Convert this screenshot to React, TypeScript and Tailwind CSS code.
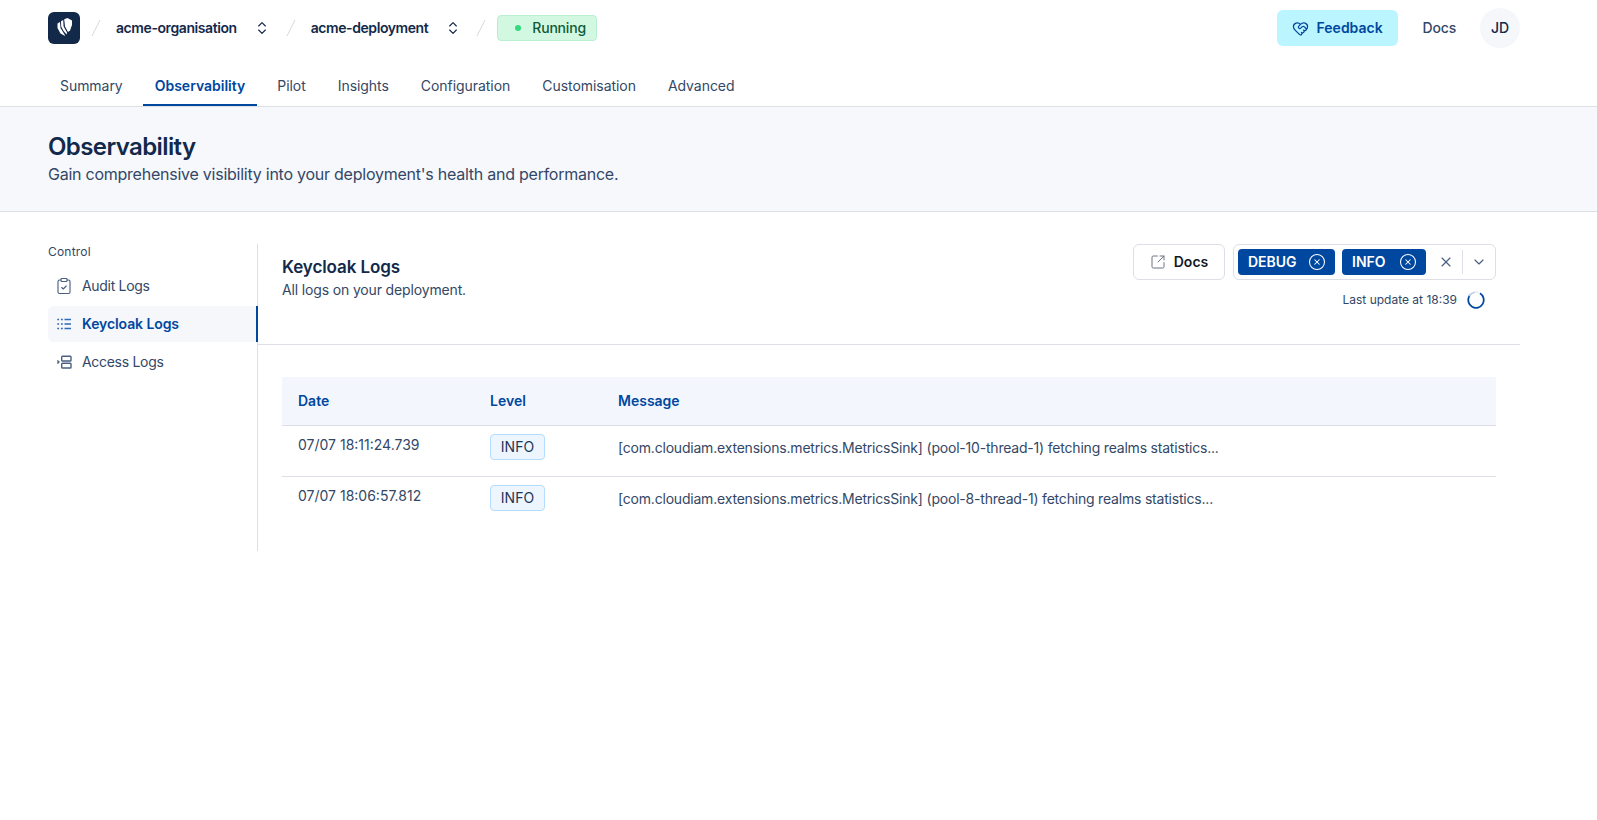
import { ClipboardCheck, HeartHandshake, SquareArrowOutUpRight, CircleX, X, ChevronDown, ChevronsUpDown } from "lucide-react";

const tabs = ["Summary", "Observability", "Pilot", "Insights", "Configuration", "Customisation", "Advanced"];

function Slash() {
  return (
    <svg width="10" height="20" viewBox="0 0 10 20" className="shrink-0">
      <path d="M1 18 L9 2" stroke="#d5d9e0" strokeWidth="1" />
    </svg>
  );
}

function Logo() {
  return (
    <div className="w-8 h-8 rounded-md bg-[#12294a] shrink-0">
      <svg width="32" height="32" viewBox="0 0 32 32" fill="#fff">
        <path d="M9.5 11.5 L12 10 L12.5 16 L16.5 22.5 L17 24 L12.5 21.5 L9.5 16 Z" />
        <path d="M13 9.2 L15.2 8 L15.6 14.5 L19 20.5 L18.6 22.4 L15.4 18.8 L13.2 14.5 Z" />
        <path d="M16.2 7.2 L19.5 6 L24 8.5 L24 13 L22 18.5 L20 20 L17 14.5 Z" />
      </svg>
    </div>
  );
}

function ListDots() {
  return (
    <svg width="18" height="18" viewBox="0 0 18 18" fill="none" stroke="#2f6bb5" strokeWidth="1.5" className="shrink-0">
      <path d="M2.3 4.5h1.8M2.3 9h1.8M2.3 13.5h1.8M6 4.5h1.8M6 9h1.8M6 13.5h1.8" />
      <path d="M9.5 4.5h6.5M9.5 9h6.5M9.5 13.5h6.5" />
    </svg>
  );
}

function AccessIcon() {
  return (
    <svg width="18" height="18" viewBox="0 0 18 18" fill="none" stroke="#4a5f82" strokeWidth="1.4" className="shrink-0">
      <rect x="6.7" y="3.2" width="9.3" height="4.8" rx="0.8" />
      <rect x="6.7" y="10.2" width="9.3" height="4.8" rx="0.8" />
      <path d="M2.3 7.5 L3.9 9 L2.3 10.5" />
    </svg>
  );
}

function Spinner() {
  return (
    <svg width="20" height="20" viewBox="0 0 20 20" fill="none">
      <circle cx="10" cy="10" r="7.8" stroke="#0047a0" strokeWidth="1.8" strokeDasharray="38 11" transform="rotate(-60 10 10)" />
      <circle cx="10" cy="10" r="7.8" stroke="#c3d3e8" strokeWidth="1.8" strokeDasharray="7 42" transform="rotate(-150 10 10)" />
      <circle cx="10" cy="10" r="7.8" stroke="#e6edf6" strokeWidth="1.8" strokeDasharray="4 45" transform="rotate(-99 10 10)" />
    </svg>
  );
}

function Chip({ label, width }: { label: string; width: string }) {
  return (
    <span className={`${width} h-[26px] rounded bg-[#0047a0] text-white text-sm font-semibold flex items-center justify-between pl-[10px] pr-[9px]`}>
      {label}
      <CircleX size={18} strokeWidth={1.4} />
    </span>
  );
}

function Row({ date, thread }: { date: string; thread: string }) {
  return (
    <div className="flex h-[51px] border-b border-[#dcdfe5] last:border-b-0 text-sm text-[#334766]">
      <div className="w-[208px] pl-4 pt-[9px] leading-[20px] text-[#334766]">{date}</div>
      <div className="w-[128px] pt-[8px]">
        <span className="inline-flex items-center justify-center w-[55px] h-[26px] rounded border border-[#b5dcfb] bg-[#edf6fe] text-[#1f3556]">INFO</span>
      </div>
      <div className="flex-1 pt-[12px] leading-[20px] tracking-[-0.2px]">
        [com.cloudiam.extensions.metrics.MetricsSink] ({thread}) fetching realms statistics...
      </div>
    </div>
  );
}

export default function App() {
  return (
    <div className="min-h-[820px] bg-white text-[#12294a] font-['Inter',sans-serif]">
      <div className="pl-12 pr-[77px]">
        <header className="h-[56px] flex items-center">
          <Logo />
          <div className="ml-[11px]"><Slash /></div>
          <span className="ml-[15px] text-sm font-semibold tracking-[-0.42px]">acme-organisation</span>
          <ChevronsUpDown size={16} strokeWidth={1.75} className="ml-[17px]" />
          <div className="ml-[16px]"><Slash /></div>
          <span className="ml-[15px] text-sm font-semibold tracking-[-0.42px]">acme-deployment</span>
          <ChevronsUpDown size={16} strokeWidth={1.75} className="ml-[17px]" />
          <div className="ml-[15px]"><Slash /></div>
          <span className="ml-[11px] h-[26px] w-[100px] rounded border border-[#b7f0cf] bg-[#d3f8e2] flex items-center pl-[17px] gap-[11px] text-sm font-medium text-[#0d5c36] tracking-[-0.2px]">
            <span className="w-[6px] h-[6px] rounded-full bg-[#34d982]" />
            Running
          </span>
          <div className="ml-auto flex items-center">
            <button className="w-[121px] h-[36px] rounded-md bg-[#bbf5ff] text-[#0047a0] text-sm font-semibold flex items-center justify-center gap-2">
              <HeartHandshake size={17} strokeWidth={1.75} />
              Feedback
            </button>
            <span className="ml-[25px] text-sm font-medium text-[#334766] tracking-[-0.2px]">Docs</span>
            <span className="ml-[24px] w-10 h-10 rounded-full bg-[#f5f7fb] flex items-center justify-center text-sm font-medium">JD</span>
          </div>
        </header>
        <nav className="h-[50px] flex items-end gap-2">
          {tabs.map((t) => (
            <a
              key={t}
              className={
                t === "Observability"
                  ? "h-[41px] px-3 pt-[2px] flex items-center text-sm font-semibold text-[#0047a0] border-b-2 border-[#0047a0]"
                  : "h-[41px] px-3 pt-[2px] flex items-center text-sm text-[#334766] tracking-[-0.05px] border-b-2 border-transparent"
              }
            >
              {t}
            </a>
          ))}
        </nav>
      </div>
      <section className="h-[106px] bg-[#f6f8fc] border-y border-[#dcdfe5] pl-12 pt-[25px]">
        <h1 className="text-2xl leading-[30px] font-semibold tracking-tight text-[#12294a]">Observability</h1>
        <p className="text-base leading-[24px] text-[#334766] tracking-[-0.245px]">Gain comprehensive visibility into your deployment's health and performance.</p>
      </section>
      <div className="pl-12 pr-[77px] pt-[32px] flex">
        <aside className="w-[210px] h-[307px] shrink-0 border-r border-[#dcdfe5]">
          <div className="text-xs leading-[16px] text-[#334766] tracking-[0.2px]">Control</div>
          <div className="mt-[8px] flex flex-col gap-[2px] text-sm">
            <a className="h-[36px] flex items-center gap-[9px] pl-[7px] text-[#334766] tracking-[-0.3px]">
              <ClipboardCheck size={18} strokeWidth={1.5} color="#4a5f82" />
              Audit Logs
            </a>
            <a className="h-[36px] flex items-center gap-[9px] pl-[7px] -mr-px rounded-l-md bg-[#f5f7fb] border-r-2 border-[#0047a0] font-semibold text-[#0047a0] tracking-[-0.1px]">
              <ListDots />
              Keycloak Logs
            </a>
            <a className="h-[36px] flex items-center gap-[9px] pl-[7px] text-[#334766] tracking-[-0.3px]">
              <AccessIcon />
              Access Logs
            </a>
          </div>
        </aside>
        <main className="flex-1 min-w-0">
          <div className="h-[101px] border-b border-[#dcdfe5] pl-6 pr-6 flex justify-between">
            <div className="pt-[11px]">
              <h2 className="text-[17px] leading-[24px] font-semibold text-[#12294a] tracking-[-0.1px]">Keycloak Logs</h2>
              <p className="mt-[1px] text-sm leading-[20px] text-[#334766] tracking-[-0.15px]">All logs on your deployment.</p>
            </div>
            <div className="flex flex-col items-end">
              <div className="flex gap-2">
                <button className="w-[92px] h-[36px] rounded-md border border-[#dcdfe5] bg-white flex items-center justify-center gap-2 text-sm font-semibold text-[#111827]">
                  <SquareArrowOutUpRight size={16} strokeWidth={1.5} color="#6b7280" />
                  Docs
                </button>
                <div className="w-[263px] h-[36px] rounded-md border border-[#dcdfe5] flex items-center pl-[4px] gap-[7px]">
                  <Chip label="DEBUG" width="w-[97px]" />
                  <Chip label="INFO" width="w-[84px]" />
                  <X size={16} strokeWidth={1.75} color="#4a5f82" className="ml-[5px]" />
                  <span className="w-px h-[24px] bg-[#dcdfe5] ml-[1px]" />
                  <ChevronDown size={16} strokeWidth={1.75} color="#4a5f82" className="ml-[1px]" />
                </div>
              </div>
              <div className="mt-[10px] flex items-center gap-[9px] pr-[10px] text-xs text-[#334766]">
                Last update at 18:39
                <Spinner />
              </div>
            </div>
          </div>
          <div className="pl-6 pr-6 pt-[32px]">
            <div className="h-[49px] flex items-center bg-[#f3f7fd] border-b border-[#dcdfe5] text-sm font-semibold text-[#0047a0]">
              <div className="w-[208px] pl-4">Date</div>
              <div className="w-[128px]">Level</div>
              <div>Message</div>
            </div>
            <Row date="07/07 18:11:24.739" thread="pool-10-thread-1" />
            <Row date="07/07 18:06:57.812" thread="pool-8-thread-1" />
          </div>
        </main>
      </div>
    </div>
  );
}
